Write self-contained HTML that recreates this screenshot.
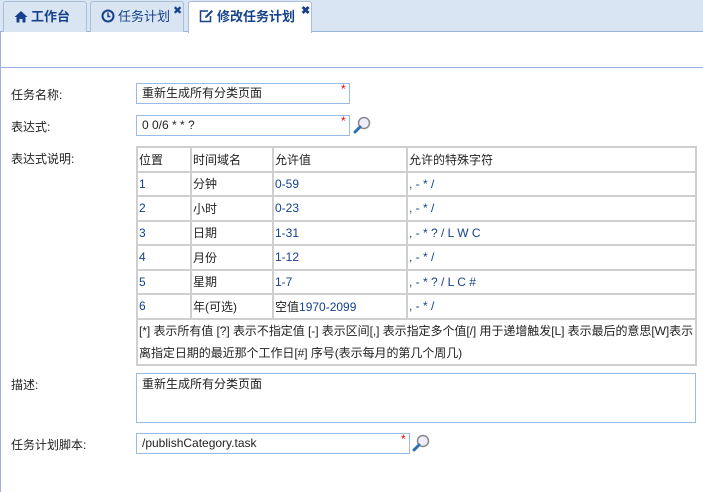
<!DOCTYPE html>
<html><head><meta charset="utf-8"><style>
*{margin:0;padding:0;box-sizing:border-box}
body{width:703px;height:492px;background:#fff;font-family:"Liberation Sans","Noto Sans CJK SC",sans-serif;font-size:12px;color:#222;position:relative;overflow:hidden}
.bar{position:absolute;left:0;top:0;width:703px;height:32px;background:#dae5f3;border-bottom:1px solid #99b4d8}
.tab{position:absolute;top:1px;height:31px;border:1px solid #a9bfd9;border-bottom:none;border-radius:3px 3px 0 0;background:#dae5f3;font-size:13px;font-weight:bold;color:#15428b;line-height:30px;padding-left:10px}
.tab.act{background:#fff;height:32px;color:#222}
.tab svg{vertical-align:-2px;margin-right:3px}
.x{position:absolute;top:-6px;font-size:11px;color:#15428b}
.lb{position:absolute;left:11px;font-size:12px;color:#222}
.in{position:absolute;border:1px solid #99bbe8;background:#fff;padding-left:5px;font-size:12px;line-height:19px;color:#222}
.st{position:absolute;color:#e00;font-size:12px}
table{position:absolute;left:136px;top:146px;width:561px;border-collapse:separate;border-spacing:2px;background:#cfcfcf}
td{background:#fff;height:22.5px;padding:0 1px;font-size:12px;vertical-align:middle}
td.n{color:#15428b}
</style></head><body>
<div class="bar">
<div class="tab" style="left:3px;width:84px"><svg width="14" height="13" viewBox="0 0 14 13"><path d="M7 1L0.5 7H2.5V12.5H5.5V9H8.5V12.5H11.5V7H13.5Z" fill="#15428b"/></svg>工作台</div>
<div class="tab" style="left:90px;width:94px;font-weight:normal;color:#15428b"><svg width="14" height="14" viewBox="0 0 14 14"><circle cx="7" cy="7" r="5.5" fill="none" stroke="#15428b" stroke-width="2"/><path d="M7 3.5V7.5H9.5" fill="none" stroke="#15428b" stroke-width="1.5"/></svg>任务计划<span class="x" style="left:82px">✖</span></div>
<div class="tab act" style="left:188px;width:124px"><svg width="15" height="14" viewBox="0 0 15 14"><path d="M9 2H1.5V12.5H11.5V7" fill="none" stroke="#15428b" stroke-width="1.5"/><path d="M6 9L6.5 7L12.5 1L14 2.5L8 8.5Z" fill="#15428b"/></svg><span style="color:#15428b">修改任务计划</span><span class="x" style="left:112px">✖</span></div>
</div>
<div style="position:absolute;left:0;top:32px;width:1px;height:460px;background:#99b4d8"></div>
<div style="position:absolute;left:0;top:67px;width:703px;height:1px;background:#99b4d8"></div>
<div class="lb" style="top:86px">任务名称:</div>
<div class="in" style="left:136px;top:83px;width:214px;height:21px">重新生成所有分类页面</div><span class="st" style="left:341px;top:82px">*</span>
<div class="lb" style="top:118px">表达式:</div>
<div class="in" style="left:136px;top:115px;width:214px;height:21px">0 0/6 * * ?</div><span class="st" style="left:341px;top:114px">*</span>
<svg style="position:absolute;left:353px;top:116px" width="18" height="18"><circle cx="11" cy="7" r="5.5" fill="#eef" stroke="#888" stroke-width="1.5"/><line x1="7" y1="11" x2="2" y2="16" stroke="#2c6fb7" stroke-width="3" stroke-linecap="round"/></svg>
<div class="lb" style="top:150px">表达式说明:</div>
<table>
<tr><td style="width:52px">位置</td><td style="width:80px">时间域名</td><td style="width:132px">允许值</td><td>允许的特殊字符</td></tr>
<tr><td class="n">1</td><td>分钟</td><td class="n">0-59</td><td class="n">, - * /</td></tr>
<tr><td class="n">2</td><td>小时</td><td class="n">0-23</td><td class="n">, - * /</td></tr>
<tr><td class="n">3</td><td>日期</td><td class="n">1-31</td><td class="n">, - * ? / L W C</td></tr>
<tr><td class="n">4</td><td>月份</td><td class="n">1-12</td><td class="n">, - * /</td></tr>
<tr><td class="n">5</td><td>星期</td><td class="n">1-7</td><td class="n">, - * ? / L C #</td></tr>
<tr><td class="n">6</td><td>年(可选)</td><td>空值<span style="color:#15428b">1970-2099</span></td><td class="n">, - * /</td></tr>
<tr><td colspan="4" style="line-height:22px;padding:0 1px;letter-spacing:-0.05px">[*] 表示所有值 [?] 表示不指定值 [-] 表示区间[,] 表示指定多个值[/] 用于递增触发[L] 表示最后的意思[W]表示离指定日期的最近那个工作日[#] 序号(表示每月的第几个周几)</td></tr>
</table>
<div class="lb" style="top:376px">描述:</div>
<div class="in" style="left:136px;top:373px;width:560px;height:50px;padding-top:2px;line-height:16px">重新生成所有分类页面</div>
<div class="lb" style="top:436px">任务计划脚本:</div>
<div class="in" style="left:136px;top:433px;width:274px;height:21px">/publishCategory.task</div><span class="st" style="left:401px;top:432px">*</span>
<svg style="position:absolute;left:412px;top:434px" width="18" height="18"><circle cx="11" cy="7" r="5.5" fill="#eef" stroke="#888" stroke-width="1.5"/><line x1="7" y1="11" x2="2" y2="16" stroke="#2c6fb7" stroke-width="3" stroke-linecap="round"/></svg>
</body></html>
